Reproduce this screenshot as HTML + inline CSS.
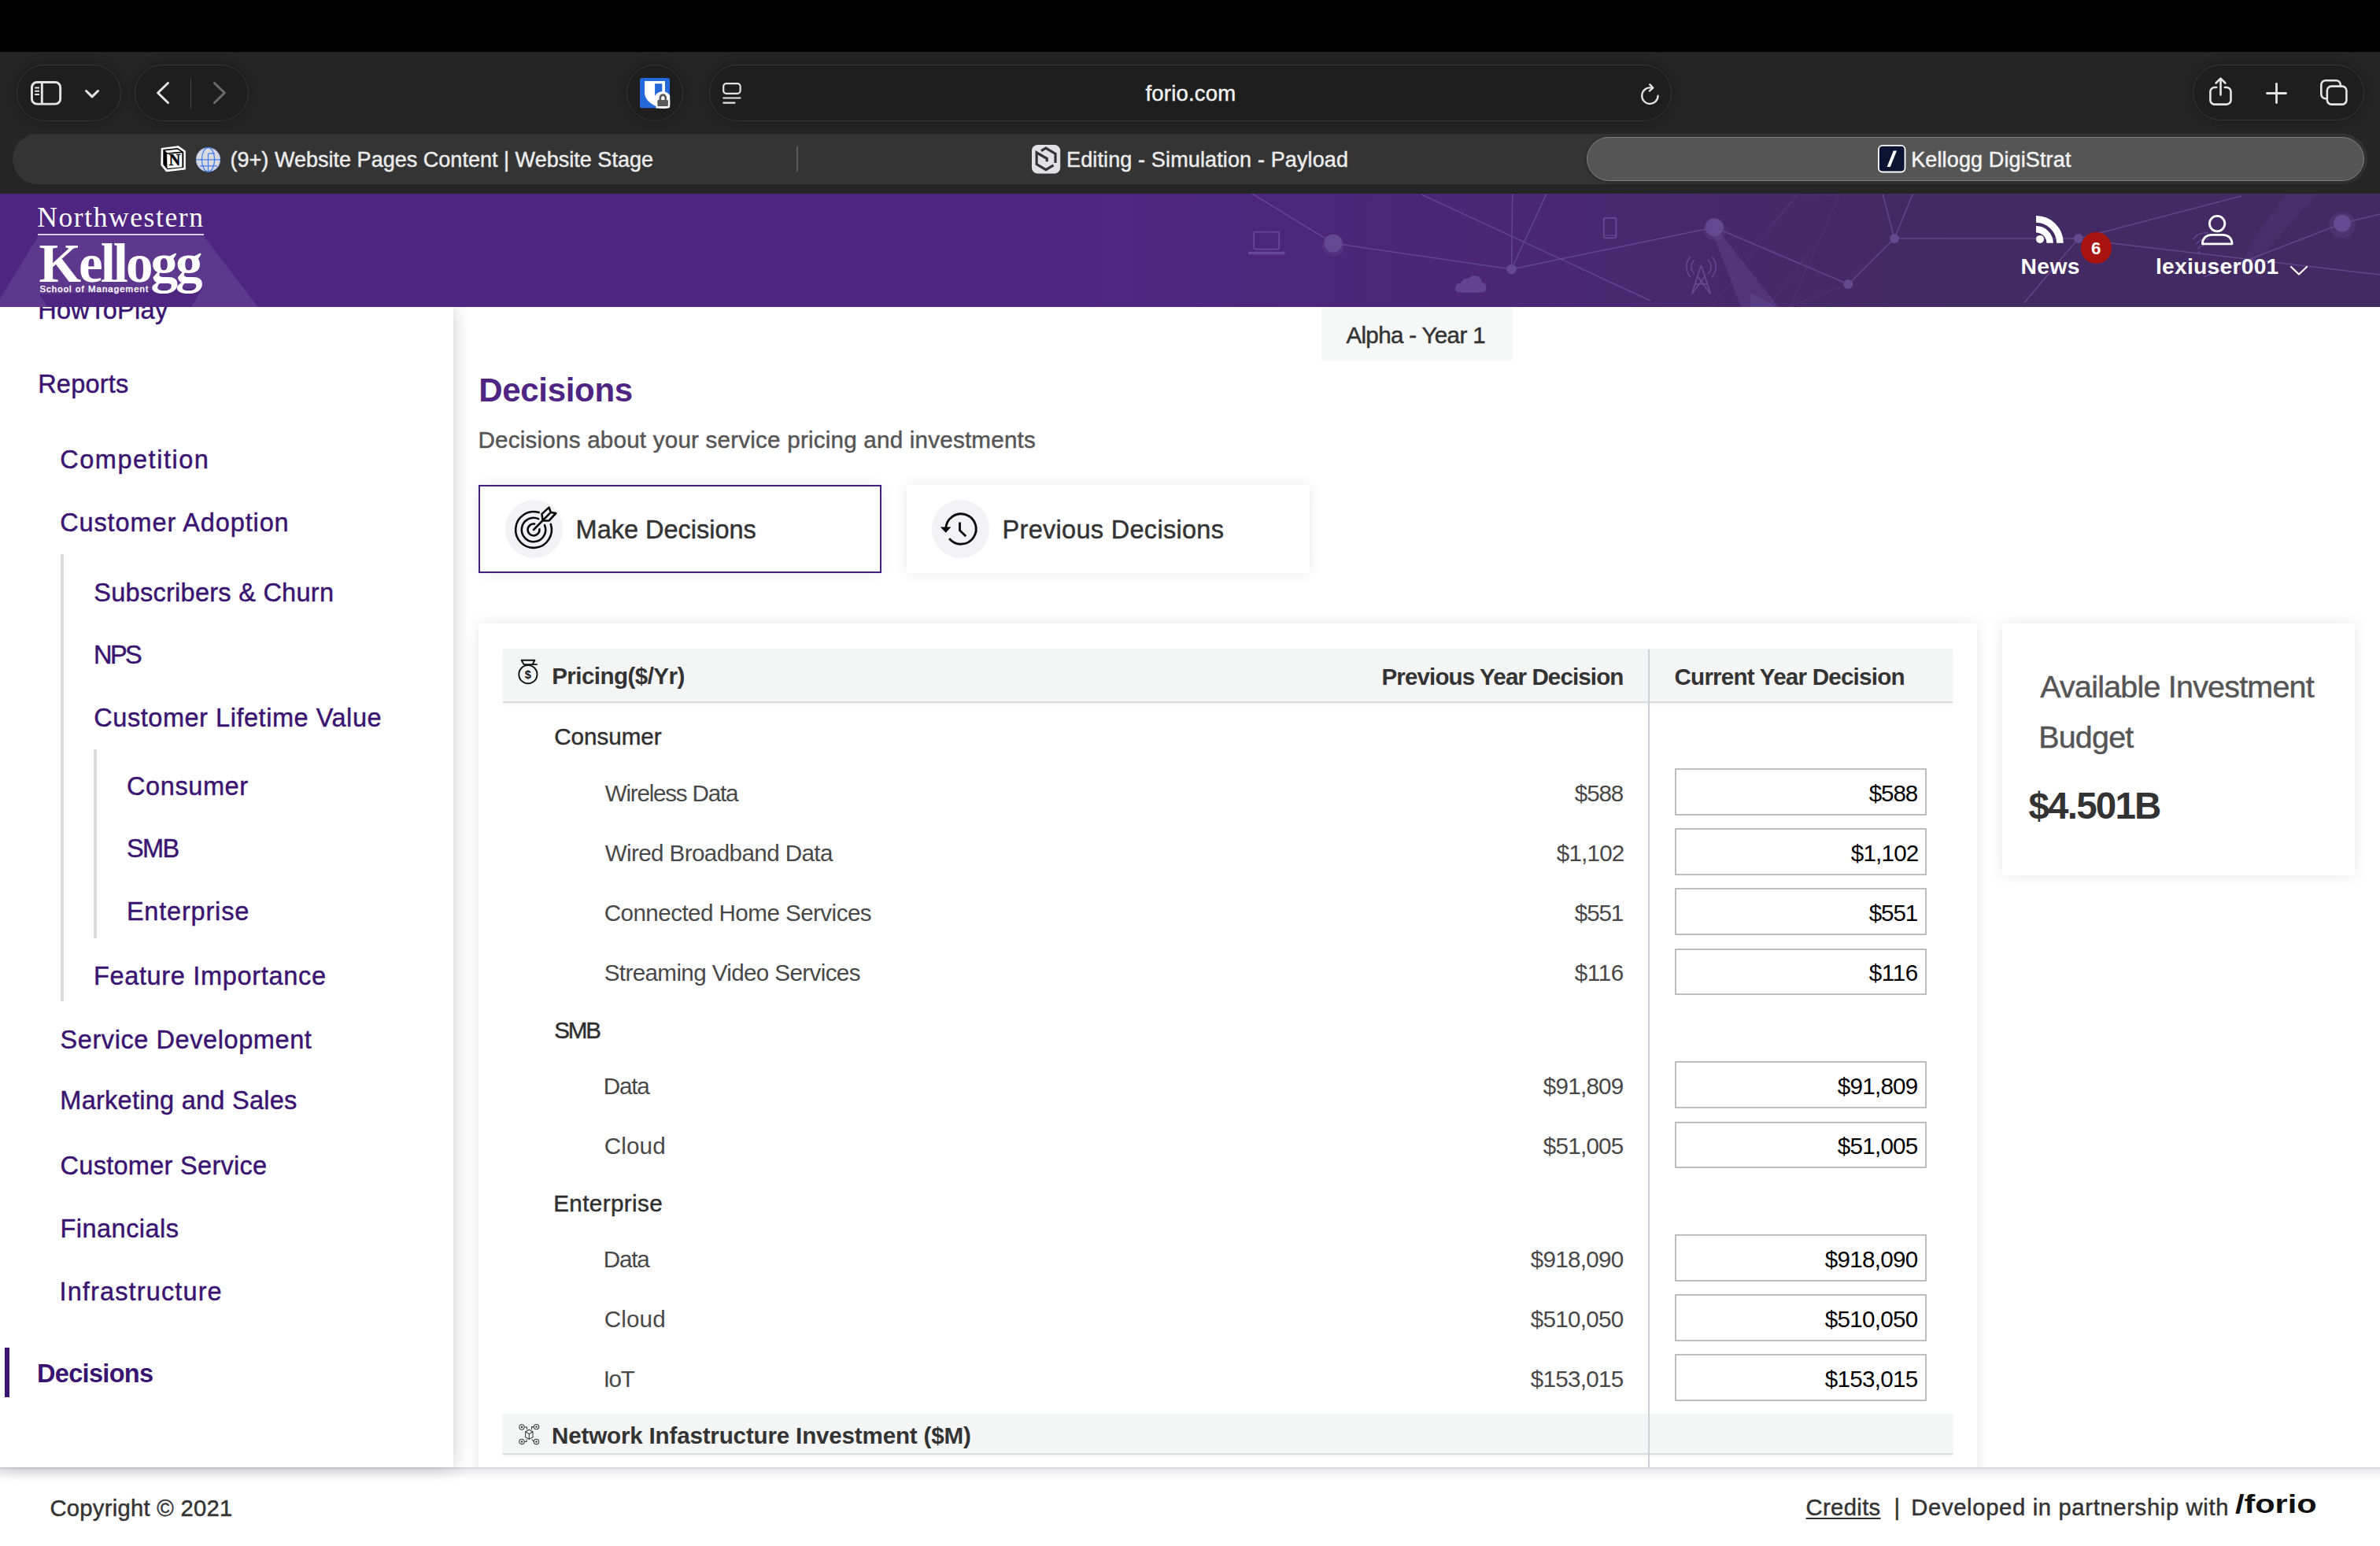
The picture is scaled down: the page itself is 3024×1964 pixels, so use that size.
<!DOCTYPE html>
<html lang="en"><head><meta charset="utf-8"><title>Kellogg DigiStrat</title>
<style>
*{box-sizing:border-box}
html,body{margin:0;padding:0}
body{width:3024px;height:1964px;position:relative;overflow:hidden;background:#fff;font-family:"Liberation Sans",sans-serif;color:#333}
body *{position:absolute;margin:0;padding:0}
.t{white-space:pre;display:block}
.s{-webkit-text-stroke:.45px}
ul,li{list-style:none}
a{color:inherit;text-decoration:none}
h1,h2,h3,p{font-weight:400;font-size:inherit}
svg{overflow:visible}
#macbar{left:0;top:0;width:3024px;height:66px;background:#000;z-index:7}
.pill{background:#1e1e1e;border:1.5px solid #373737;border-radius:36px;box-shadow:0 0 14px rgba(0,0,0,.28)}
.card{background:#fff;box-shadow:0 0 18px rgba(0,0,0,.09)}
.thead{background:#f4f5f5;border-bottom:2px solid #dcdcdc;box-shadow:0 2px 3px rgba(0,0,0,.05)}
.inp{background:#fff;border:2px solid #bdbdbd}
.navline{background:#dcdcdc;width:3.4px}
</style></head>
<body>
<div id="macbar"></div>
<header id="chrome" style="left:0px;top:66px;width:3024px;height:180px;background:#252525;z-index:6">
<div class="pill" style="left:20.5px;top:16px;width:133px;height:71.5px;">
<svg style="left:17.799999999999997px;top:19.799999999999997px" width="40" height="31" fill="none" stroke="#e4e4e4" stroke-width="2.9"><rect x="1.45" y="1.45" width="36.2" height="27.7" rx="6.5"/><path d="M14.3 1.5V29"/><path d="M5.2 8.5H11M5.2 12.7H11M5.2 16.9H11" stroke-width="2"/></svg>
<svg style="left:86.3px;top:30.89999999999999px" width="18" height="11" fill="none" stroke="#e4e4e4" stroke-width="3" stroke-linecap="round" stroke-linejoin="round"><path d="M1.5 1.5L9 8.9L16.5 1.5"/></svg>
</div>
<div class="pill" style="left:170.5px;top:16px;width:145.2px;height:71.5px;">
<svg style="left:27.099999999999994px;top:21.099999999999994px" width="16" height="28" fill="none" stroke="#e4e4e4" stroke-width="3" stroke-linecap="round" stroke-linejoin="round"><path d="M14.5 1.5L1.6 14L14.5 26.5"/></svg>
<i style="left:70.30000000000001px;top:15.5px;width:1.5px;height:39px;background:#464646"></i>
<svg style="left:99.10000000000002px;top:21.099999999999994px" width="16" height="28" fill="none" stroke="#6c6c6c" stroke-width="3" stroke-linecap="round" stroke-linejoin="round"><path d="M1.5 1.5L14.4 14L1.5 26.5"/></svg>
</div>
<div class="pill" style="left:796px;top:16px;width:72px;height:71.5px;">
<svg style="left:15.5px;top:16.2px" width="39" height="39"><defs><clipPath id="bwc"><rect width="38.2" height="38.4" rx="3"/></clipPath></defs><g clip-path="url(#bwc)"><rect width="38.2" height="38.4" fill="#2468dc"/><path d="M6.1 4H32V19C32 27 25 32.5 19.3 35.6C13.5 32.5 6.1 27 6.1 19Z" fill="#fff"/><path d="M19.1 7.3H28.3V19C28.3 25 24 29 19.1 31.6Z" fill="#2468dc"/><circle cx="28.8" cy="28.4" r="11.1" fill="#fff"/><rect x="28.8" y="28.4" width="12" height="12" fill="#fff"/><rect x="20.4" y="33.5" width="12" height="6" fill="#fff"/><rect x="22.4" y="27.9" width="13.5" height="8.1" rx="1" fill="#595959"/><path d="M25.9 28.4V25A3.4 3.4 0 0 1 32.7 25V28.4" fill="none" stroke="#595959" stroke-width="2.7"/></g></svg>
</div>
<div class="pill" style="left:900.5px;top:16px;width:1223px;height:71.5px;">
<svg style="left:16.799999999999955px;top:22.0px" width="24" height="28" fill="none" stroke="#e4e4e4" stroke-width="2.2" stroke-linecap="round"><rect x="1.2" y="1.2" width="21.4" height="12.6" rx="3.6"/><path d="M1.3 19.5H22.5M1.3 25.6H15.5"/></svg>
<span class="t s"  style="left:554.0px;top:16.5px;font-size:27.5px;line-height:37px;letter-spacing:0.190px;color:#f2f2f2;">forio.com</span>
<svg style="left:1183.6999999999998px;top:22.700000000000003px" width="24" height="27" fill="none" stroke="#e4e4e4" stroke-width="2.3" stroke-linecap="round" stroke-linejoin="round"><path d="M21.6 15.7A10.2 10.2 0 1 1 14 5.8"/><path d="M11.2 1.3L15.3 5.6L10.8 9.6"/></svg>
</div>
<div class="pill" style="left:2786px;top:16px;width:217.5px;height:71px;">
<svg style="left:19.5px;top:15.299999999999997px" width="29" height="36" fill="none" stroke="#e4e4e4" stroke-width="2.6" stroke-linecap="round" stroke-linejoin="round"><path d="M9.2 13H7A5.5 5.5 0 0 0 1.4 18.5V29A5.5 5.5 0 0 0 7 34.6H22A5.5 5.5 0 0 0 27.5 29V18.5A5.5 5.5 0 0 0 22 13H19.8"/><path d="M14.5 22.5V2M8.6 7.5L14.5 1.6L20.4 7.5"/></svg>
<svg style="left:92.0px;top:21.700000000000003px" width="27" height="27" fill="none" stroke="#e4e4e4" stroke-width="2.8" stroke-linecap="round"><path d="M13.5 1.5V25.5M1.5 13.5H25.5"/></svg>
<svg style="left:160.9000000000001px;top:18.299999999999997px" width="35" height="33" fill="none" stroke="#e4e4e4" stroke-width="2.6" stroke-linejoin="round"><rect x="8.8" y="8.6" width="24.6" height="23" rx="5.5"/><path d="M8.6 24.3H6.8A5.5 5.5 0 0 1 1.3 18.8V6.8A5.5 5.5 0 0 1 6.8 1.3H20.3A5.5 5.5 0 0 1 25.8 6.8V8.4"/></svg>
</div>
<div class="tabbar" style="left:16px;top:104px;width:2992px;height:64px;background:#343434;border-radius:32px">
<a class="tab" style="left:0px;top:0px;width:997px;height:64px;">
<svg style="left:188.7px;top:16.2px" width="31" height="32"><path d="M0.3 2.7L21.6 -0.2L30.2 5.9V28.8L6.4 31.7L-0.1 23.7Z" fill="#fff" stroke="#fff" stroke-width="1.2" stroke-linejoin="round"/><path d="M2.3 4L20.7 1.9L28.3 7.1V27.1L7.5 29.2L2.3 23.1Z" fill="#000"/><path d="M4.3 5.5L20.1 3.7L25.1 6.5L7.7 8.2Z" fill="#fff"/><path d="M7.1 9.7L26.4 8.2V26.3L7.5 27.9Z" fill="#fff"/><text x="16.9" y="24.1" text-anchor="middle" style="font:bold 20px 'Liberation Serif',serif" fill="#000" stroke="#000" stroke-width=".5">N</text></svg>
<svg style="left:232.9px;top:16.6px" width="32" height="32" fill="none"><circle cx="15.5" cy="15.8" r="15.6" fill="#dadae0"/><g stroke="#2a6fe8" stroke-width="1.3" stroke-opacity=".85"><path d="M15.5 8V31.2M.2 15.8H30.8M16 7.8H24M5 23.8H27"/><ellipse cx="15.5" cy="15.8" rx="8.1" ry="15.3"/></g><circle cx="15.5" cy="15.8" r="15.2" stroke="#2a6fe8" stroke-width=".9" stroke-dasharray="1.4 1.6"/></svg>
<span class="t s"  style="left:276.5px;top:15.0px;font-size:27px;line-height:36px;letter-spacing:0.023px;color:#ececec;">(9+) Website Pages Content | Website Stage</span>
</a>
<i style="left:996.3px;top:16px;width:1.6px;height:32px;background:#595959"></i>
<a class="tab" style="left:998px;top:0px;width:1000px;height:64px;">
<svg style="left:297px;top:13.8px" width="37" height="37" fill="none"><rect width="36.2" height="36.5" rx="7.5" fill="#e2e2e4"/><path d="M12 7.6L17.9 4.1L30 11.3V23M19.2 21.2V17.5L6.1 9.9V24.6L17.9 31.6L27.6 25.9" stroke="#333" stroke-width="3.2"/></svg>
<span class="t s"  style="left:341.0px;top:15.0px;font-size:27px;line-height:36px;letter-spacing:0.132px;color:#ececec;">Editing - Simulation - Payload</span>
</a>
<a class="tab active" style="left:2000px;top:4px;width:988px;height:56px;background:#555;border:1.5px solid #808080;border-radius:28px;box-shadow:0 1px 4px rgba(0,0,0,.35)">
<svg style="left:368.9px;top:8.9px" width="36" height="36"><rect x=".9" y=".9" width="33.6" height="33.6" rx="5" fill="#0c1433" stroke="#fff" stroke-width="1.8"/><path d="M11.6 28L19.8 7.4H24L15.8 28Z" fill="#fff"/></svg>
<span class="t s"  style="left:411.2px;top:9.5px;font-size:27px;line-height:36px;letter-spacing:0.131px;color:#f4f4f4;">Kellogg DigiStrat</span>
</a>
</div>
</header>
<header id="banner" style="left:0px;top:246px;width:3024px;height:144px;background:linear-gradient(90deg,#4f2582 0,#4f2582 45%,#432a63 82%,#432a63 100%);overflow:hidden;z-index:5">
<svg style="left:0;top:0" width="3024" height="144" viewBox="0 246 3024 144" fill="none"><polygon points="48.7,299.7 258.8,299.7 327.7,390 0,390 0,379.5" fill="#fff" fill-opacity=".09"/><polygon points="50,374 257,366 243,390 60,390" fill="#4f2582"/><g stroke="#7257a2" stroke-width="1.5" stroke-opacity=".62"><path d="M1590.8 246L1694 309L1920.5 342L2178.3 288.7L2348.4 361L2407 303H2640.8"/><path d="M1806 247L2097 382M1921.8 246L1920.5 342L1965 246M2392 246L2407 303L2430.7 246"/><path d="M2640.8 303L2572 384.5M2640.8 303L2848 249M2641 304L3024 349M3024 272L2976 283.7L2800 352"/></g><g stroke="#7257a2" stroke-width="1" stroke-opacity=".4" stroke-dasharray="2 1.5"><path d="M2175.6 390L2283 246M2284.5 248L2224 315.6M2284.5 248H2336.6L2274.4 390M2348.4 361L2272 390M2246 390L2300 318"/></g><polygon points="2176,296 2184,294 2260,390 2212,390" fill="#7257a2" fill-opacity=".28"/><polygon points="2905,246 2945,246 2880,318 2838,352 2866,300" fill="#7257a2" fill-opacity=".12"/><polygon points="2224,372 2258,390 2224,390" fill="#7257a2" fill-opacity=".3"/><g fill="#634990"><circle cx="1694" cy="309" r="11.5"/><circle cx="1920.5" cy="342" r="6.3"/><circle cx="2178.3" cy="288.7" r="11.5"/><circle cx="2407" cy="303" r="6"/><circle cx="2348.4" cy="361" r="6"/><circle cx="2640.8" cy="303" r="6"/><circle cx="2976" cy="283.7" r="11"/></g><g fill="#634990" fill-opacity=".3"><circle cx="1694" cy="312" r="14"/><circle cx="2178.3" cy="292" r="14"/><circle cx="2976" cy="286" r="17"/></g><g stroke="#7257a2" stroke-width="1.8" stroke-opacity=".7"><rect x="1593.2" y="294.6" width="32" height="22" rx="2"/><path d="M1586 321.5H1632.6" stroke-width="3.6"/><rect x="2037.8" y="276.8" width="15.6" height="25.6" rx="2.4"/><path d="M2038 299H2053" stroke-width="1.2"/><path d="M2161.5 337L2149.5 373.5M2161.5 337L2173.5 373.5M2153 361L2170 361M2156 350L2173 373M2167 350L2150 373" stroke-width="1.6"/><path d="M2153 330A12 12 0 0 0 2153 348M2148 326A19 19 0 0 0 2148 352M2170 330A12 12 0 0 1 2170 348M2175 326A19 19 0 0 1 2175 352" stroke-width="1.4"/><path d="M2790 311A14 14 0 0 1 2806 304M2786 304A22 22 0 0 1 2806 296M2793 317A7 7 0 0 1 2800 312" stroke-width="1.6" stroke-opacity=".6"/></g><circle cx="2794" cy="321" r="1.8" fill="#7257a2" fill-opacity=".6"/><path d="M1852 371.5H1884.5A7 7 0 0 0 1883 358.5A9.5 9.5 0 0 0 1866 354A8 8 0 0 0 1856 360A6.2 6.2 0 0 0 1852 371.5Z" fill="#7257a2" fill-opacity=".6"/></svg>
<a class="logo" style="left:40px;top:10px;width:300px;height:134px;">
<span class="t"  style="left:7.2px;top:-4.0px;font-size:35.5px;line-height:48px;letter-spacing:1.603px;color:#fff;font-family:'Liberation Serif', serif;">Northwestern</span>
<i style="left:8px;top:40.5px;width:211px;height:2px;background:#d8d0e4"></i>
<span class="t"  style="left:9.4px;top:34.0px;font-size:69px;line-height:90px;letter-spacing:-3.006px;font-weight:700;color:#fff;font-family:'Liberation Serif', serif;">Kellogg</span>
<span class="t s"  style="left:10.4px;top:104.0px;font-size:11.4px;line-height:14px;letter-spacing:1.085px;color:#fff;">School of Management</span>
</a>
<a class="news" style="left:2560px;top:20px;width:130px;height:100px;">
<svg style="left:27px;top:8.2px" width="36" height="36" fill="none" stroke="#fff"><circle cx="5" cy="29.9" r="5" fill="#fff" stroke="none"/><path d="M0 17.2A17.6 17.6 0 0 1 17.6 34.8" stroke-width="8.4"/><path d="M0 4.4A30.4 30.4 0 0 1 30.4 34.8" stroke-width="8.7"/></svg>
<span class="t"  style="left:7.5px;top:53.0px;font-size:28.2px;line-height:38px;letter-spacing:0.447px;font-weight:700;color:#fff;">News</span>
<b class="badge" style="left:83.5px;top:29px;width:39.8px;height:39.8px;border-radius:50%;background:#a9130f">
<span class="t"  style="left:13.6px;top:6.0px;font-size:22.3px;line-height:29px;font-weight:700;color:#fff;">6</span>
</b>
</a>
<a class="user" style="left:2735px;top:20px;width:210px;height:100px;">
<svg style="left:62px;top:7.3px" width="41" height="39" fill="none" stroke="#fff" stroke-width="2.8" stroke-linejoin="round"><circle cx="20.1" cy="11.1" r="9.7"/><path d="M1.4 36.8C1.4 30 6 25.3 13 25.3H27.4C34.4 25.3 39 30 39 36.8Z"/></svg>
<span class="t"  style="left:4.0px;top:53.0px;font-size:28.2px;line-height:38px;letter-spacing:0.269px;font-weight:700;color:#fff;">lexiuser001</span>
<svg style="left:174.5px;top:71.5px" width="22" height="12" fill="none" stroke="#fff" stroke-width="2.2" stroke-linecap="round" stroke-linejoin="round"><path d="M1 1L11 10.5L21 1"/></svg>
</a>
</header>
<nav id="sidebar" style="left:0px;top:390px;width:576px;height:1474px;background:#fff;box-shadow:0 0 22px rgba(0,0,0,.2);overflow:hidden;z-index:3">
<ul>
<li><a class="t s"  style="left:48.2px;top:-17.0px;font-size:32.5px;line-height:42px;letter-spacing:0.311px;color:#3a1470;">HowToPlay</a></li>
<li><a class="t s"  style="left:48.2px;top:77.0px;font-size:32.5px;line-height:42px;letter-spacing:0.209px;color:#3a1470;">Reports</a></li>
<ul>
<li><a class="t s"  style="left:76.2px;top:173.0px;font-size:32.5px;line-height:42px;letter-spacing:1.526px;color:#3a1470;">Competition</a></li>
<li><a class="t s"  style="left:76.2px;top:253.0px;font-size:32.5px;line-height:42px;letter-spacing:0.880px;color:#3a1470;">Customer Adoption</a></li>
<ul>
<li class="navline" style="left:77.3px;top:314px;height:568px"></li>
<li><a class="t s"  style="left:119.3px;top:342.0px;font-size:32.5px;line-height:42px;letter-spacing:0.268px;color:#3a1470;">Subscribers &amp; Churn</a></li>
<li><a class="t s"  style="left:118.9px;top:421.0px;font-size:32.5px;line-height:42px;letter-spacing:-2.474px;color:#3a1470;">NPS</a></li>
<li><a class="t s"  style="left:119.3px;top:501.0px;font-size:32.5px;line-height:42px;letter-spacing:0.538px;color:#3a1470;">Customer Lifetime Value</a></li>
<ul>
<li class="navline" style="left:119.2px;top:562px;height:239.7px"></li>
<li><a class="t s"  style="left:161.0px;top:588.0px;font-size:32.5px;line-height:42px;letter-spacing:0.587px;color:#3a1470;">Consumer</a></li>
<li><a class="t s"  style="left:161.0px;top:667.0px;font-size:32.5px;line-height:42px;letter-spacing:-1.575px;color:#3a1470;">SMB</a></li>
<li><a class="t s"  style="left:160.9px;top:747.0px;font-size:32.5px;line-height:42px;letter-spacing:0.806px;color:#3a1470;">Enterprise</a></li>
</ul>
<li><a class="t s"  style="left:118.9px;top:829.0px;font-size:32.5px;line-height:42px;letter-spacing:0.674px;color:#3a1470;">Feature Importance</a></li>
</ul>
<li><a class="t s"  style="left:76.5px;top:910.0px;font-size:32.5px;line-height:42px;letter-spacing:0.580px;color:#3a1470;">Service Development</a></li>
<li><a class="t s"  style="left:76.3px;top:987.0px;font-size:32.5px;line-height:42px;letter-spacing:0.265px;color:#3a1470;">Marketing and Sales</a></li>
<li><a class="t s"  style="left:76.5px;top:1070.0px;font-size:32.5px;line-height:42px;letter-spacing:0.294px;color:#3a1470;">Customer Service</a></li>
<li><a class="t s"  style="left:76.5px;top:1150.0px;font-size:32.5px;line-height:42px;letter-spacing:0.471px;color:#3a1470;">Financials</a></li>
<li><a class="t s"  style="left:75.5px;top:1230.0px;font-size:32.5px;line-height:42px;letter-spacing:1.132px;color:#3a1470;">Infrastructure</a></li>
</ul>
<li style="left:6px;top:1322px;width:6px;height:63px;background:#3a1470"></li>
<li><a class="t"  style="left:47.0px;top:1334.0px;font-size:32.5px;line-height:42px;letter-spacing:-0.682px;font-weight:700;color:#3a1470;">Decisions</a></li>
</ul>
</nav>
<main id="main" style="left:576px;top:390px;width:2448px;height:1474px;overflow:hidden;z-index:1">
<div class="yeartab" style="left:1102.5px;top:0px;width:243px;height:67.5px;background:#f6f7f7">
<span class="t s"  style="left:31.9px;top:16.0px;font-size:29.6px;line-height:39px;letter-spacing:-0.670px;color:#333;">Alpha - Year 1</span>
</div>
<h1 class="t"  style="left:32.2px;top:78.0px;font-size:42px;line-height:55px;letter-spacing:-0.307px;font-weight:700;color:#4e2583;">Decisions</h1>
<p class="t s"  style="left:31.5px;top:149.0px;font-size:29.6px;line-height:39px;letter-spacing:0.213px;color:#555;">Decisions about your service pricing and investments</p>
<a class="tabbtn active" style="left:32px;top:226px;width:512px;height:111.5px;background:#fff;border:2px solid #43207f;box-shadow:0 0 16px rgba(0,0,0,.08)">
<i style="left:31.9px;top:17.1px;width:73.6px;height:73.6px;border-radius:50%;background:#f3f3f5"></i>
<svg class="ico" style="left:68.3px;top:55.4px" width="1" height="1" fill="none" stroke="#0a0a0a" stroke-width="2.6" stroke-linecap="round" stroke-linejoin="round"><path d="M6.70 -21.90A22.9 22.9 0 1 0 21.78 -7.08"/><path d="M6.18 -13.89A15.2 15.2 0 1 0 14.03 -5.84"/><path d="M1.17 -7.41A7.5 7.5 0 1 0 7.46 -0.78"/><path d="M0 0L21.8 -22.1M11.6 -11.6L10.5 -20.1L19.6 -28.4L21.8 -22.1L28.3 -21L19.5 -11.5Z"/></svg>
<span class="t s"  style="left:121.6px;top:34.0px;font-size:32.5px;line-height:42px;letter-spacing:-0.018px;color:#333;">Make Decisions</span>
</a>
<a class="tabbtn" style="left:576px;top:226px;width:512px;height:111.5px;background:#fff;box-shadow:0 0 16px rgba(0,0,0,.09)">
<i style="left:31.8px;top:19.1px;width:73.6px;height:73.6px;border-radius:50%;background:#f3f3f5"></i>
<svg class="ico" style="left:68.6px;top:55.6px" width="1" height="1" fill="none" stroke="#0a0a0a" stroke-width="2.85"><path d="M-19.20 -0.00A19.2 19.2 0 1 1 -14.92 12.08"/><path d="M-26.2 -2.5H-12.5L-19.3 4.8Z" fill="#0a0a0a" stroke="none"/><path d="M-1.5 -8.5V1.7L6.2 9.2"/></svg>
<span class="t s"  style="left:121.6px;top:36.0px;font-size:32.5px;line-height:42px;letter-spacing:0.293px;color:#333;">Previous Decisions</span>
</a>
<section class="card" style="left:31.5px;top:401.5px;width:1904.5px;height:1200px;">
<div class="thead" style="left:31.5px;top:32.5px;width:1842px;height:68.5px;">
<svg class="ico" style="left:19.4px;top:14px" width="1" height="1" fill="none" stroke="#111" stroke-width="1.9" stroke-linejoin="round"><path d="M4.6 0.8H21.4L18.6 6.1H7.6ZM18.6 6.1H24.8"/><circle cx="12.9" cy="18.7" r="11.6"/><text x="12.9" y="24" text-anchor="middle" font-family="Liberation Sans, sans-serif" font-size="14.6" font-weight="700" fill="#111" stroke="none">$</text></svg>
<h2 class="t"  style="left:62.2px;top:15.0px;font-size:29.6px;line-height:39px;letter-spacing:-0.567px;font-weight:700;color:#333;">Pricing($/Yr)</h2>
<span class="t"  style="left:1116.5px;top:16.0px;font-size:29.6px;line-height:39px;letter-spacing:-0.898px;font-weight:700;color:#333;">Previous Year Decision</span>
<span class="t"  style="left:1488.5px;top:16.0px;font-size:29.6px;line-height:39px;letter-spacing:-0.781px;font-weight:700;color:#333;">Current Year Decision</span>
</div>
<h3 class="t s"  style="left:96.7px;top:124.5px;font-size:29.6px;line-height:39px;letter-spacing:-0.008px;color:#2f2f2f;">Consumer</h3>
<span class="t lbl lt"  style="left:161.2px;top:196.5px;font-size:29.6px;line-height:39px;letter-spacing:-1.210px;color:#484848;">Wireless Data</span>
<span class="t prev lt"  style="left:1393.3px;top:196.5px;font-size:29.6px;line-height:39px;letter-spacing:-1.125px;color:#484848;">$588</span>
<input class="inp" type="text" readonly value="$588" style="left:1520.7px;top:184.7px;width:319.6px;height:59.5px;border:2px solid #bdbdbd;background:#fff;padding:4px 9.67px 0 0;text-align:right;font:29.6px 'Liberation Sans', sans-serif;color:#000;outline:0;border-radius:0;letter-spacing:-1.125px;">
<span class="t lbl lt"  style="left:161.2px;top:272.5px;font-size:29.6px;line-height:39px;letter-spacing:-0.599px;color:#484848;">Wired Broadband Data</span>
<span class="t prev lt"  style="left:1370.3px;top:272.5px;font-size:29.6px;line-height:39px;letter-spacing:-0.811px;color:#484848;">$1,102</span>
<input class="inp" type="text" readonly value="$1,102" style="left:1520.7px;top:260.9px;width:319.6px;height:59.5px;border:2px solid #bdbdbd;background:#fff;padding:4px 8.35px 0 0;text-align:right;font:29.6px 'Liberation Sans', sans-serif;color:#000;outline:0;border-radius:0;letter-spacing:-0.811px;">
<span class="t lbl lt"  style="left:160.2px;top:348.5px;font-size:29.6px;line-height:39px;letter-spacing:-0.550px;color:#484848;">Connected Home Services</span>
<span class="t prev lt"  style="left:1393.3px;top:348.5px;font-size:29.6px;line-height:39px;letter-spacing:-1.125px;color:#484848;">$551</span>
<input class="inp" type="text" readonly value="$551" style="left:1520.7px;top:336.8px;width:319.6px;height:59.5px;border:2px solid #bdbdbd;background:#fff;padding:4px 9.67px 0 0;text-align:right;font:29.6px 'Liberation Sans', sans-serif;color:#000;outline:0;border-radius:0;letter-spacing:-1.125px;">
<span class="t lbl lt"  style="left:160.2px;top:424.5px;font-size:29.6px;line-height:39px;letter-spacing:-0.615px;color:#484848;">Streaming Video Services</span>
<span class="t prev lt"  style="left:1393.3px;top:424.5px;font-size:29.6px;line-height:39px;letter-spacing:-0.393px;color:#484848;">$116</span>
<input class="inp" type="text" readonly value="$116" style="left:1520.7px;top:413.0px;width:319.6px;height:59.5px;border:2px solid #bdbdbd;background:#fff;padding:4px 8.93px 0 0;text-align:right;font:29.6px 'Liberation Sans', sans-serif;color:#000;outline:0;border-radius:0;letter-spacing:-0.393px;">
<h3 class="t s"  style="left:96.7px;top:497.5px;font-size:29.6px;line-height:39px;letter-spacing:-2.195px;color:#2f2f2f;">SMB</h3>
<span class="t lbl lt"  style="left:159.2px;top:568.5px;font-size:29.6px;line-height:39px;letter-spacing:-1.184px;color:#484848;">Data</span>
<span class="t prev lt"  style="left:1353.3px;top:568.5px;font-size:29.6px;line-height:39px;letter-spacing:-0.753px;color:#484848;">$91,809</span>
<input class="inp" type="text" readonly value="$91,809" style="left:1520.7px;top:556.9px;width:319.6px;height:59.5px;border:2px solid #bdbdbd;background:#fff;padding:4px 9.29px 0 0;text-align:right;font:29.6px 'Liberation Sans', sans-serif;color:#000;outline:0;border-radius:0;letter-spacing:-0.753px;">
<span class="t lbl lt"  style="left:160.2px;top:644.5px;font-size:29.6px;line-height:39px;letter-spacing:0.159px;color:#484848;">Cloud</span>
<span class="t prev lt"  style="left:1353.3px;top:644.5px;font-size:29.6px;line-height:39px;letter-spacing:-0.753px;color:#484848;">$51,005</span>
<input class="inp" type="text" readonly value="$51,005" style="left:1520.7px;top:633.1px;width:319.6px;height:59.5px;border:2px solid #bdbdbd;background:#fff;padding:4px 9.29px 0 0;text-align:right;font:29.6px 'Liberation Sans', sans-serif;color:#000;outline:0;border-radius:0;letter-spacing:-0.753px;">
<h3 class="t s"  style="left:95.7px;top:717.5px;font-size:29.6px;line-height:39px;letter-spacing:0.398px;color:#2f2f2f;">Enterprise</h3>
<span class="t lbl lt"  style="left:159.2px;top:788.5px;font-size:29.6px;line-height:39px;letter-spacing:-1.184px;color:#484848;">Data</span>
<span class="t prev lt"  style="left:1337.3px;top:788.5px;font-size:29.6px;line-height:39px;letter-spacing:-0.711px;color:#484848;">$918,090</span>
<input class="inp" type="text" readonly value="$918,090" style="left:1520.7px;top:776.7px;width:319.6px;height:59.5px;border:2px solid #bdbdbd;background:#fff;padding:4px 9.25px 0 0;text-align:right;font:29.6px 'Liberation Sans', sans-serif;color:#000;outline:0;border-radius:0;letter-spacing:-0.711px;">
<span class="t lbl lt"  style="left:160.2px;top:864.5px;font-size:29.6px;line-height:39px;letter-spacing:0.159px;color:#484848;">Cloud</span>
<span class="t prev lt"  style="left:1337.3px;top:864.5px;font-size:29.6px;line-height:39px;letter-spacing:-0.711px;color:#484848;">$510,050</span>
<input class="inp" type="text" readonly value="$510,050" style="left:1520.7px;top:852.8px;width:319.6px;height:59.5px;border:2px solid #bdbdbd;background:#fff;padding:4px 9.25px 0 0;text-align:right;font:29.6px 'Liberation Sans', sans-serif;color:#000;outline:0;border-radius:0;letter-spacing:-0.711px;">
<span class="t lbl lt"  style="left:159.2px;top:940.5px;font-size:29.6px;line-height:39px;letter-spacing:-1.340px;color:#484848;">IoT</span>
<span class="t prev lt"  style="left:1337.3px;top:940.5px;font-size:29.6px;line-height:39px;letter-spacing:-0.711px;color:#484848;">$153,015</span>
<input class="inp" type="text" readonly value="$153,015" style="left:1520.7px;top:928.9px;width:319.6px;height:59.5px;border:2px solid #bdbdbd;background:#fff;padding:4px 9.25px 0 0;text-align:right;font:29.6px 'Liberation Sans', sans-serif;color:#000;outline:0;border-radius:0;letter-spacing:-0.711px;">
<div class="thead" style="left:31.5px;top:1004.8px;width:1842px;height:52.2px;">
<svg class="ico" style="left:19.5px;top:12.5px" width="1" height="1" fill="none" stroke="#3a3a3a" stroke-width="1.05"><circle cx="4" cy="4" r="3.2"/><circle cx="22.5" cy="3.6" r="3.2"/><circle cx="4" cy="22.4" r="3.2"/><circle cx="22.5" cy="22.4" r="3.2"/><circle cx="4" cy="4" r=".7" fill="#222"/><circle cx="22.5" cy="3.6" r=".7" fill="#222"/><circle cx="4" cy="22.4" r=".7" fill="#222"/><circle cx="22.5" cy="22.4" r=".7" fill="#222"/><path d="M7.2 4H10.5V7M19.3 3.6H16.5V7M7.2 22.4H10V19.5M19.3 22.4L16.8 19.5"/><path d="M13.3 7.2L18 9.8V16.6L13.3 19.4L8.6 16.6V9.8ZM8.6 9.8L13.3 12.6L18 9.8M13.3 12.6V19.4"/></svg>
<h2 class="t"  style="left:62.0px;top:7.7px;font-size:29.6px;line-height:39px;letter-spacing:-0.181px;font-weight:700;color:#333;">Network Infastructure Investment ($M)</h2>
</div>
<i style="left:1486.5px;top:33px;width:2px;height:1100px;background:#cfcfd8"></i>
</section>
<aside class="card" style="left:1968px;top:402px;width:448px;height:320px;">
<span class="t s"  style="left:48.3px;top:54.0px;font-size:39.4px;line-height:52px;letter-spacing:-0.758px;color:#555;">Available Investment</span>
<span class="t s"  style="left:46.2px;top:118.0px;font-size:39.4px;line-height:52px;letter-spacing:-0.760px;color:#555;">Budget</span>
<span class="t"  style="left:33.5px;top:200.0px;font-size:47.5px;line-height:63px;letter-spacing:-1.797px;font-weight:700;color:#333;">$4.501B</span>
</aside>
</main>
<footer id="footer" style="left:0px;top:1864px;width:3024px;height:100px;background:#fff">
<i style="left:0;top:0;width:3024px;height:2px;background:#dadadd"></i><i style="left:0;top:2px;width:3024px;height:14px;background:linear-gradient(#e9e9ec,#fff)"></i>
<p class="t s"  style="left:63.5px;top:33.0px;font-size:29.2px;line-height:38px;letter-spacing:0.277px;color:#333;">Copyright © 2021</p>
<a class="t s"  style="left:2294.6px;top:32.0px;font-size:29.2px;line-height:38px;letter-spacing:0.357px;color:#333;text-decoration:underline;text-decoration-thickness:2px;text-underline-offset:3px;">Credits</a>
<span class="t s"  style="left:2406.6px;top:32.0px;font-size:29.2px;line-height:38px;color:#333;">|</span>
<span class="t s"  style="left:2428.3px;top:32.0px;font-size:29.2px;line-height:38px;letter-spacing:0.668px;color:#333;">Developed in partnership with</span>
<b class="t"  style="left:2840.0px;top:24.0px;font-size:34px;line-height:44px;letter-spacing:-0.023px;font-weight:700;color:#111;transform:scaleX(1.22);transform-origin:0 0;">/forio</b>
</footer>
<script>(function(){var w=window.innerWidth;if(w&&Math.abs(w-3024)>2){document.documentElement.style.zoom=w/3024}})()</script>
</body></html>
